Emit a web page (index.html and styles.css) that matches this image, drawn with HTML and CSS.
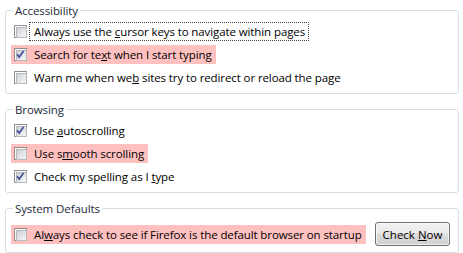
FILE: index.html
```html
<!DOCTYPE html>
<html lang="en">
<head>
    <meta charset="UTF-8">
    <title>Advanced - General</title>
    <link rel="stylesheet" href="styles.css">
</head>
<body>
    <fieldset class="group">
        <legend>Accessibility</legend>
        <div class="option">
            <span class="box"></span>
            <span class="label focused">Always use the <u>c</u>ursor keys to navigate within pages</span>
        </div>
        <div class="option marked">
            <span class="box checked">
                <svg viewBox="0 0 13 13"><path d="M3 6.2 L5.2 9 L9.6 3"/></svg>
            </span>
            <span class="label">Search for te<u>x</u>t when I start typing</span>
        </div>
        <div class="option">
            <span class="box"></span>
            <span class="label">Warn me when we<u>b</u> sites try to redirect or reload the page</span>
        </div>
    </fieldset>

    <fieldset class="group">
        <legend>Browsing</legend>
        <div class="option">
            <span class="box checked">
                <svg viewBox="0 0 13 13"><path d="M3 6.2 L5.2 9 L9.6 3"/></svg>
            </span>
            <span class="label">Use <u>a</u>utoscrolling</span>
        </div>
        <div class="option marked">
            <span class="box"></span>
            <span class="label">Use s<u>m</u>ooth scrolling</span>
        </div>
        <div class="option">
            <span class="box checked">
                <svg viewBox="0 0 13 13"><path d="M3 6.2 L5.2 9 L9.6 3"/></svg>
            </span>
            <span class="label">Check my spelling as I <u>t</u>ype</span>
        </div>
    </fieldset>

    <fieldset class="group">
        <legend>System Defaults</legend>
        <div class="defaults-row">
            <div class="option marked">
                <span class="box"></span>
                <span class="label">Al<u>w</u>ays check to see if Firefox is the default browser on startup</span>
            </div>
            <button class="check-now">Check <u>N</u>ow</button>
        </div>
    </fieldset>
</body>
</html>
```

FILE: styles.css
```css
* {
    box-sizing: border-box;
}

body {
    margin: 0;
    padding: 3px 4px 0 5px;
    background: #ffffff;
    color: #000000;
    font-family: 'Open Sans', sans-serif;
    font-size: 11.5px;
    letter-spacing: -0.1px;
    line-height: 15px;
}

.group {
    margin: 0 0 8px 0;
    padding: 4px 5px 6px 5px;
    border: 1px solid #d5dfe5;
    border-radius: 3px;
    display: flex;
    flex-direction: column;
    align-items: flex-start;
    gap: 4px;
}

.group legend {
    padding: 0 2px;
    margin-left: 2px;
    color: #1e2a3a;
}

.option {
    display: flex;
    align-items: center;
    height: 19px;
    padding-left: 3px;
    white-space: nowrap;
}

.option.marked {
    background: #ffc0c0;
}

.box {
    width: 13px;
    height: 13px;
    border: 1px solid #8f8f8f;
    padding: 1px;
    position: relative;
    flex: none;
    background: rgba(255, 255, 255, 0.85);
}

.box::before {
    content: '';
    display: block;
    width: 100%;
    height: 100%;
    border: 1px solid #b5b9be;
    background: linear-gradient(135deg, rgba(200, 204, 210, 0.9), rgba(246, 246, 246, 0.8));
}

.box svg {
    position: absolute;
    top: -1px;
    left: -1px;
    width: 13px;
    height: 13px;
}

.box svg path {
    fill: none;
    stroke: #3f4f9c;
    stroke-width: 1.7;
}

.label {
    margin-left: 2px;
    padding: 1px 3px 1px 4px;
    border: 1px dotted transparent;
}

.label.focused {
    border-color: #444;
}

.defaults-row {
    display: flex;
    align-items: center;
    justify-content: space-between;
    align-self: stretch;
    margin-top: 2px;
    padding-right: 3px;
}

.check-now {
    font: inherit;
    color: #000;
    width: 75px;
    height: 24px;
    border: 1px solid #707070;
    border-radius: 3px;
    background: linear-gradient(to bottom, #f2f2f2 0%, #ebebeb 45%, #dddddd 50%, #cfcfcf 100%);
    box-shadow: inset 0 0 0 1px rgba(255, 255, 255, 0.7);
    padding: 0;
}
```
